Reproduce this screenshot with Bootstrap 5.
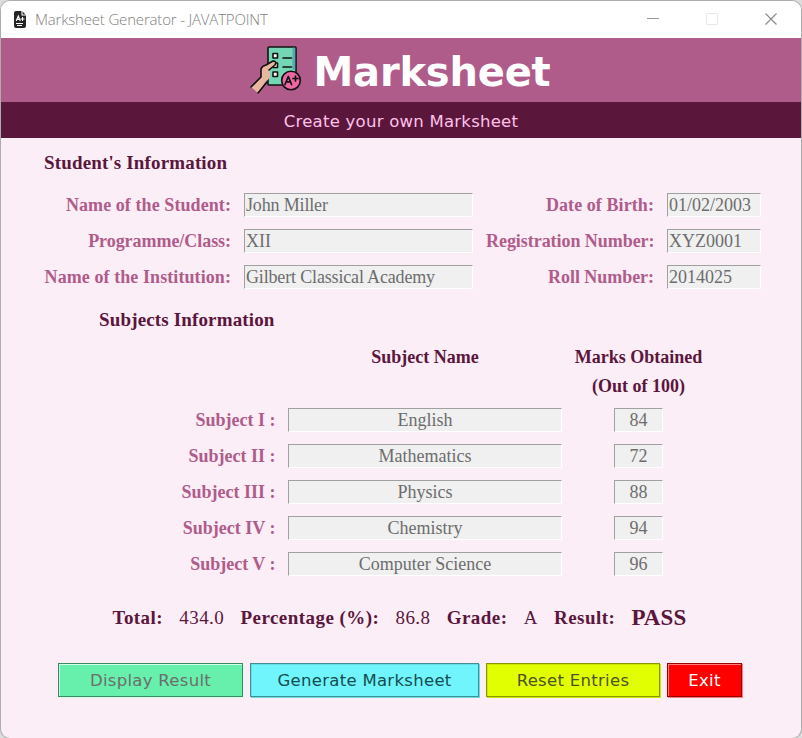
<!DOCTYPE html>
<html lang="en">
<head>
<meta charset="utf-8">
<meta name="viewport" content="width=device-width, initial-scale=1">
<title>Marksheet Generator - JAVATPOINT</title>
<link href="https://cdn.jsdelivr.net/npm/bootstrap@5.3.0/dist/css/bootstrap.min.css" rel="stylesheet">
<style>
body{background:#dcdcdc;width:802px;height:738px;overflow:hidden;font-family:"Liberation Serif",serif;font-size:18px;line-height:24px;color:#5b163c}
.window{width:802px;height:739px;background:#fbeef7;border:1px solid #adadad;border-bottom-color:#b5b5b5;border-radius:10px}
.titlebar{height:37px;background:#fff;padding:0 24px 0 13px;font-family:"Open Sans","Noto Sans",sans-serif;font-size:15px;color:#808080}
.caption{letter-spacing:-.18px;margin:-2px 0 0 9px;font-weight:300}
.controls{gap:41px;margin-top:-1px}
.banner{height:64px;background:#b05c8b;padding-right:2px;font:bold 40px/64px "DejaVu Sans",sans-serif;color:#fff}
.banner h1{font:inherit;letter-spacing:-.2px;margin:3px 0 0 12px}
.tagline{height:36px;background:#5b163c;color:#ffc2e8;font:16.500px/39px "DejaVu Sans",sans-serif;letter-spacing:.25px}
.heading{font:bold 19px/24px "Liberation Serif",serif;letter-spacing:.15px}
.heading-student{margin:13px 0 0 43px}
.heading-subjects{margin:19px 0 0 98px}
.info{display:grid;grid-template-columns:187px 229px 168px 94px;column-gap:13px;row-gap:12px;margin:18px 0 0 43px}
.lbl{color:#b05c8b;font-weight:bold;text-align:right;white-space:nowrap;line-height:25px;height:24px}
.info .lbl{letter-spacing:.08px}
.info .snug{letter-spacing:-.05px}
.entry{height:24px;line-height:23px;background:#f0f0f0;color:#6d6d6d;border:1px solid #fff;border-top-color:#a0a0a0;border-left-color:#a0a0a0;padding-left:1px;white-space:nowrap}
.tight{letter-spacing:-.16px}
.marks{display:grid;grid-template-columns:176px 274px 49px;row-gap:12px;margin:7px 0 0 99px}
.marks .entry{text-align:center;padding:0}
.marks .lbl{width:175.500px}
.subj{margin-left:12px;margin-right:-12px}
.score{margin-left:64px;margin-right:-64px}
.columns{display:grid;grid-template-columns:274px 149px;column-gap:2px;margin:11px 0 0 287px;font-weight:bold;line-height:29px;text-align:center}
.totals{margin:30px 0 0 111.500px;height:24px;white-space:nowrap;gap:16.200px;font-size:19px;letter-spacing:.45px}
.verdict{font-size:23px;letter-spacing:.1px}
.actions{gap:7px;margin:33px 0 0 57px}
.actions .btn{height:34px;border-radius:0;padding:0;font:16.500px/34px "DejaVu Sans",sans-serif;letter-spacing:.3px;border:1px solid}
.actions .display{width:185px;background:#66f0ac;color:#6d6d6d;border-color:#398a61;box-shadow:inset 1px 1px #d6ffe9,1px 1px #d6ffe9}
.actions .generate{width:229px;background:#70f5fc;color:#154c50;border-color:#438f94;box-shadow:inset 1px 1px #67dce3,1px 1px #67dce3}
.actions .reset{width:174px;background:#e1ff00;color:#4b5320;border-color:#869900;box-shadow:inset 1px 1px #cce600,1px 1px #cce600}
.actions .exit{width:75px;background:#f00;color:#fff;border-color:#900;box-shadow:inset 1px 1px #ff8080,1px 1px #ff8080}
</style>
</head>
<body>
<main class="window overflow-hidden">
<header class="titlebar d-flex align-items-center">
<svg width="12" height="17" viewBox="0 0 12 17"><path fill="#252525" d="M2 0h6l4 4v11a2 2 0 0 1-2 2H2a2 2 0 0 1-2-2V2a2 2 0 0 1 2-2z"/><path d="M8 0v4h4M2.2 10 4.3 5l2 5M3 8.400h3M6.500 8h4M8.500 6v4M2 12.500h7M3 14.500h5" fill="none" stroke="#fff" stroke-width="1.1"/></svg>
<span class="caption">Marksheet Generator - JAVATPOINT</span>
<div class="controls d-flex align-items-center ms-auto">
<svg width="13" height="12"><path d="M0 5.500h12" stroke="#999"/></svg>
<svg width="23" height="12"><rect x="5.500" y=".5" width="11" height="11" rx="1" fill="none" stroke="#e6e6e6"/></svg>
<svg width="12" height="12"><path d="m.5.5 11 11m0-11-11 11" stroke="#8c8c8c" stroke-width="1.2"/></svg>
</div>
</header>
<div class="banner d-flex justify-content-center align-items-center">
<svg width="52" height="50" viewBox="0 -1 52 50" stroke="#111" stroke-width="1.6" stroke-linecap="round" stroke-linejoin="round">
<path fill="#75d6b5" d="M19 1h26q1 0 1 1v37H19q-1 0-1-1V2q0-1 1-1z"/><path fill="#55a9b4" stroke="none" d="M42.500 1.800h2.700v22h-2.700z"/>
<path fill="none" d="M33 12h8.500M33 21h8.500M33 30h3"/>
<path fill="#fff" d="M23 7.500h4.500V12H23zM23 17h4.500v4.500H23zM23 26h4.500v4.500H23z"/>
<path fill="#e9b79f" stroke="none" d="M1 41 11 31v-8q1-3 5-4l7-4q4 0 2 4l-6 5q1 1 1 5 0 4-4 6L8 47z"/>
<path fill="none" d="M1 41 11 31v-8q1-3 5-4l7-4q4 0 2 4l-6 5M8 47l9-11"/>
<circle cx="41" cy="34.500" r="9.300" fill="#ed67a4"/><path fill="none" stroke-width="1.700" d="m35 38.500 3.300-8 3.300 8m-5.500-2.700h4.300M43 32.500h5m-2.500-2.500v5"/>
</svg>
<h1>Marksheet</h1>
</div>
<div class="tagline text-center">Create your own Marksheet</div>
<h2 class="heading heading-student">Student's Information</h2>
<section class="info">
<div class="lbl">Name of the Student:</div><div class="entry tight">John Miller</div><div class="lbl">Date of Birth:</div><div class="entry">01/02/2003</div>
<div class="lbl snug">Programme/Class:</div><div class="entry">XII</div><div class="lbl snug">Registration Number:</div><div class="entry">XYZ0001</div>
<div class="lbl">Name of the Institution:</div><div class="entry tight">Gilbert Classical Academy</div><div class="lbl snug">Roll Number:</div><div class="entry">2014025</div>
</section>
<h2 class="heading heading-subjects">Subjects Information</h2>
<div class="columns"><div>Subject Name</div><div>Marks Obtained<br>(Out of 100)</div></div>
<section class="marks">
<div class="lbl">Subject I :</div><div class="entry subj">English</div><div class="entry score">84</div>
<div class="lbl">Subject II :</div><div class="entry subj">Mathematics</div><div class="entry score">72</div>
<div class="lbl">Subject III :</div><div class="entry subj">Physics</div><div class="entry score">88</div>
<div class="lbl">Subject IV :</div><div class="entry subj">Chemistry</div><div class="entry score">94</div>
<div class="lbl">Subject V :</div><div class="entry subj">Computer Science</div><div class="entry score">96</div>
</section>
<section class="totals d-flex align-items-center">
<b>Total:</b><span>434.0</span><b>Percentage (%):</b><span>86.8</span><b>Grade:</b><span>A</span><b>Result:</b><b class="verdict">PASS</b>
</section>
<div class="actions d-flex">
<button class="btn display">Display Result</button><button class="btn generate">Generate Marksheet</button><button class="btn reset">Reset Entries</button><button class="btn exit">Exit</button>
</div>
</main>
<script src="https://cdn.jsdelivr.net/npm/bootstrap@5.3.0/dist/js/bootstrap.bundle.min.js"></script>
</body>
</html>
